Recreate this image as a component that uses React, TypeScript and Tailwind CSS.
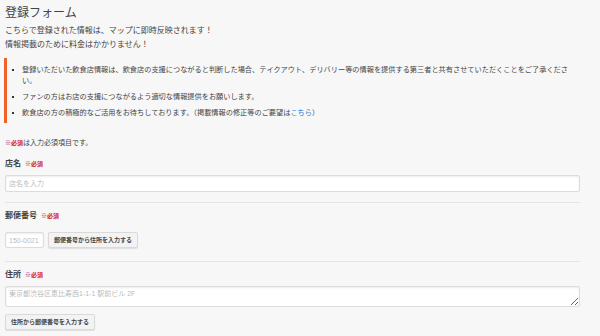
const jp = "font-['Liberation_Sans','Noto_Sans_CJK_JP',sans-serif]";

function Required() {
  return <span className="ml-[4px] text-[6px] font-bold text-[#d4202c]">※必須</span>;
}

function Label({ text }: { text: string }) {
  return (
    <div className="flex items-center text-[8px] leading-[12px] font-bold text-[#444]">
      {text}
      <Required />
    </div>
  );
}

const fieldCls =
  "block bg-white border border-[#dcdcdc] rounded-[2px] shadow-[inset_0_1px_2px_rgba(0,0,0,0.08)] px-[3px] text-[7px] text-[#444] placeholder:text-[#bbb] outline-none";

const btnCls =
  "h-[16px] px-[5px] whitespace-nowrap bg-[#f3f3f3] border border-[#dadada] rounded-[2px] shadow-[0_1px_1px_rgba(0,0,0,0.1)] text-[6px] leading-[14px] font-bold text-[#444]";

export default function App() {
  const notes = [
    "登録いただいた飲食店情報は、飲食店の支援につながると判断した場合、テイクアウト、デリバリー等の情報を提供する第三者と共有させていただくことをご了承ください。",
    "ファンの方はお店の支援につながるよう適切な情報提供をお願いします。",
  ];

  return (
    <div className={`w-[600px] h-[336px] overflow-hidden bg-[#f7f7f7] pl-[5px] pr-[20px] pt-[5px] text-[#444] ${jp}`}>
      <h1 className="text-[12px] leading-[16px] text-[#444]">登録フォーム</h1>
      <div className="mt-[3px] text-[8px] leading-[14px]">
        <p>こちらで登録された情報は、マップに即時反映されます！</p>
        <p>情報掲載のために料金はかかりません！</p>
      </div>

      <ul className="mt-[6px] -ml-px border-l-[3px] border-[#f2602c] pt-[6px] pb-[5px] pr-[8px] text-[7.2px] leading-[11px]">
        {notes.map((n) => (
          <li key={n} className="flex mb-[5px]">
            <span className="w-[15px] shrink-0 flex justify-start pl-[5px] pt-[5px]">
              <span className="w-[2px] h-[2px] bg-[#333]" />
            </span>
            <span>{n}</span>
          </li>
        ))}
        <li className="flex">
          <span className="w-[15px] shrink-0 flex justify-start pl-[5px] pt-[5px]">
            <span className="w-[2px] h-[2px] bg-[#333]" />
          </span>
          <span>
            飲食店の方の積極的なご活用をお待ちしております。（掲載情報の修正等のご要望は
            <span className="text-[#1e7fd8]">こちら</span>）
          </span>
        </li>
      </ul>

      <p className="mt-[14px] text-[7px] leading-[12px]">
        <span className="text-[6px] font-bold text-[#d4202c]">※必須</span>は入力必須項目です。
      </p>

      <div className="mt-[9px]">
        <Label text="店名" />
        <input className={`${fieldCls} mt-[5px] w-full h-[17px]`} placeholder="店名を入力" />
      </div>

      <div className="mt-[10px] border-t border-[#e4e4e4] pt-[7px]">
        <Label text="郵便番号" />
        <div className="mt-[10px] flex gap-[4px]">
          <input className={`${fieldCls} w-[39px] h-[16px]`} placeholder="150-0021" />
          <button className={btnCls}>郵便番号から住所を入力する</button>
        </div>
      </div>

      <div className="mt-[13px] border-t border-[#e4e4e4] pt-[7px]">
        <Label text="住所" />
        <textarea
          className={`${fieldCls} mt-[5px] w-full h-[21px] py-[2px] leading-[10px]`}
          placeholder="東京都渋谷区恵比寿西1-1-1 駅前ビル 2F"
        />
        <button className={`${btnCls} mt-[5px]`}>住所から郵便番号を入力する</button>
      </div>
    </div>
  );
}
